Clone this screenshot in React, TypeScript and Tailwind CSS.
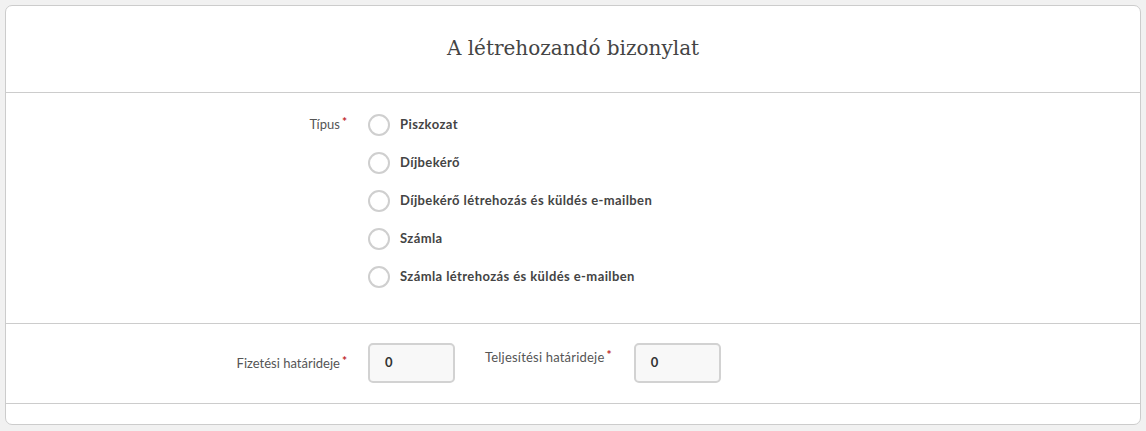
import React from "react";

const options = [
  "Piszkozat",
  "Díjbekérő",
  "Díjbekérő létrehozás és küldés e-mailben",
  "Számla",
  "Számla létrehozás és küldés e-mailben",
];

function Star() {
  return <span className="text-[#c0282d] text-[12px] font-bold relative top-[-3px] ml-[2px]">*</span>;
}

export default function App() {
  return (
    <div className="w-[1146px] h-[431px] bg-[#f1f1f1] p-[5px] font-['Lato','Noto_Sans',sans-serif]">
      <div className="h-[420px] w-[1136px] bg-white border border-[#cccccc] rounded-[7px] flex flex-col">
        <div className="h-[87px] flex items-center justify-center border-b border-[#cccccc]">
          <h1 className="text-[20px] text-[#444] font-['DejaVu_Serif',serif] tracking-[0px] pb-[3px]">
            A létrehozandó bizonylat
          </h1>
        </div>
        <div className="flex pt-[13px] pb-[27px] border-b border-[#cccccc]">
          <div className="w-[341px] text-right text-[13px] text-[#555] pt-[9px] leading-[18px]">
            Típus<Star />
          </div>
          <div className="ml-[21px] flex flex-col">
            {options.map((o) => (
              <label key={o} className="h-[38px] flex items-center">
                <span className="w-[22px] h-[22px] rounded-full border-2 border-[#cfcfcf] bg-white" />
                <span className="ml-[10px] text-[13px] font-bold tracking-[0.4px] text-[#444]">{o}</span>
              </label>
            ))}
          </div>
        </div>
        <div className="flex pt-[19px] pb-[20px] border-b border-[#cccccc]">
          <div className="w-[341px] text-right text-[13px] text-[#555] self-center leading-[18px]">
            Fizetési határideje<Star />
          </div>
          <div className="ml-[21px] w-[87px] h-[40px] rounded-[5px] border-2 border-[#d2d2d2] bg-[#f8f8f8] flex items-center pl-[15px] text-[13px] font-bold text-[#333]">
            0
          </div>
          <div className="ml-[30px] text-[13px] text-[#555] pt-[5px] leading-[18px] tracking-[0.2px]">
            Teljesítési határideje<Star />
          </div>
          <div className="ml-[22px] w-[87px] h-[40px] rounded-[5px] border-2 border-[#d2d2d2] bg-[#f8f8f8] flex items-center pl-[15px] text-[13px] font-bold text-[#333]">
            0
          </div>
        </div>
        <div className="flex-1" />
      </div>
    </div>
  );
}
